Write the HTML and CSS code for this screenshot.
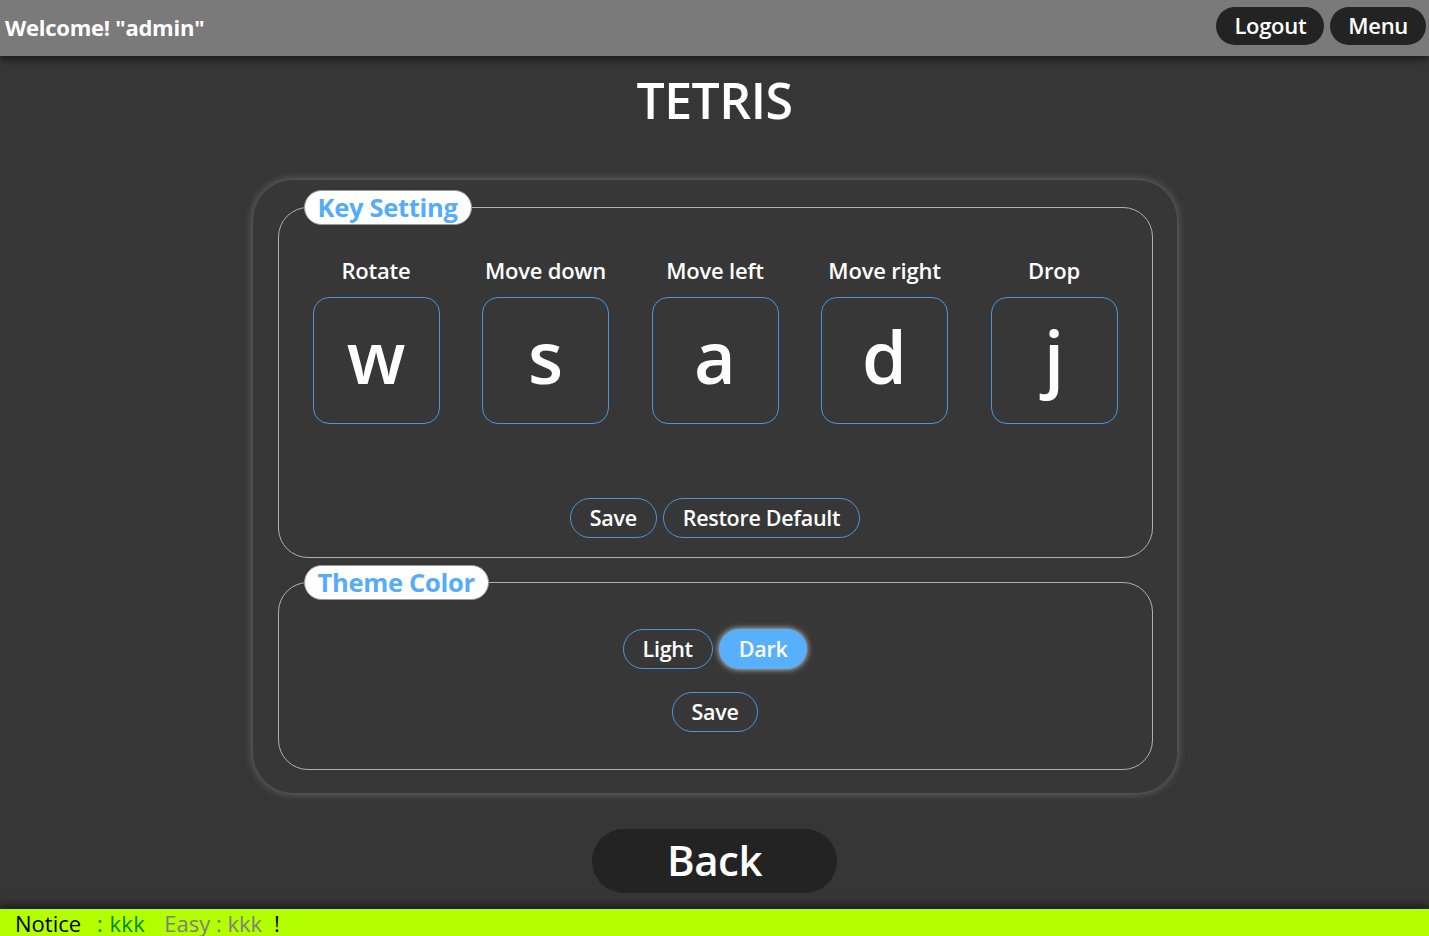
FILE: index.html
```html
<!DOCTYPE html>
<html lang="en">
<head>
<meta charset="utf-8">
<title>Tetris - Settings</title>
<link rel="stylesheet" href="styles.css">
</head>
<body>
<header class="topbar">
  <div class="welcome">Welcome! "admin"</div>
  <div class="top-actions">
    <button class="pill-dark">Logout</button>
    <button class="pill-dark">Menu</button>
  </div>
</header>
<main class="page">
  <h1 class="title">TETRIS</h1>
  <section class="card">
    <fieldset class="group keys">
      <legend class="legend">Key Setting</legend>
      <div class="key-grid">
        <div class="key-col"><div class="key-label">Rotate</div><div class="key-box">w</div></div>
        <div class="key-col"><div class="key-label">Move down</div><div class="key-box">s</div></div>
        <div class="key-col"><div class="key-label">Move left</div><div class="key-box">a</div></div>
        <div class="key-col"><div class="key-label">Move right</div><div class="key-box">d</div></div>
        <div class="key-col"><div class="key-label">Drop</div><div class="key-box">j</div></div>
      </div>
      <div class="row-buttons">
        <button class="pill-outline">Save</button>
        <button class="pill-outline">Restore Default</button>
      </div>
    </fieldset>
    <fieldset class="group theme">
      <legend class="legend">Theme Color</legend>
      <div class="row-buttons theme-choice">
        <button class="pill-outline">Light</button>
        <button class="pill-outline active">Dark</button>
      </div>
      <div class="row-buttons theme-save">
        <button class="pill-outline">Save</button>
      </div>
    </fieldset>
  </section>
  <div class="back-row"><button class="back">Back</button></div>
</main>
<footer class="notice">
  <span class="n-label">Notice</span>
  <span class="n-green">: kkk</span>
  <span class="n-gray">Easy : kkk</span>
  <span class="n-bang">!</span>
</footer>
</body>
</html>
```

FILE: styles.css
```css
* { box-sizing: border-box; }
html, body { margin: 0; padding: 0; }
body {
  background: #363636;
  font-family: "Open Sans", "Noto Sans", sans-serif;
  color: #fff;
  height: 936px;
  overflow: hidden;
  display: flex;
  flex-direction: column;
}
button { font-family: inherit; cursor: pointer; }

.topbar {
  height: 56px;
  background: #7a7a7a;
  display: flex;
  align-items: center;
  justify-content: space-between;
  padding: 0 3px 0 5px;
  box-shadow: 0 3px 8px rgba(0,0,0,0.6);
  position: relative;
  z-index: 1;
}
.welcome {
  font-size: 22px;
  font-weight: 700;
  color: #fff;
  margin-top: -2px;
  letter-spacing: -0.25px;
}
.top-actions { display: flex; gap: 6px; margin-top: -4px; }
.pill-dark {
  background: #232323;
  color: #fff;
  border: none;
  border-radius: 20px;
  height: 38px;
  padding: 0 18px 2px;
  font-size: 22px;
  font-weight: 600;
  letter-spacing: -0.3px;
}

.page { flex: 1; display: flex; flex-direction: column; align-items: center; }
.title {
  margin: 16px 0 0;
  font-size: 50px;
  font-weight: 600;
  line-height: 56px;
  letter-spacing: -0.5px;
}

.card {
  width: 924px;
  margin-top: 52px;
  border-radius: 40px;
  background: #373737;
  box-shadow: 0 0 10px rgba(220,220,220,0.35);
  padding: 10px 24px 23px 25px;
}
.group {
  margin: 0;
  border: 1px solid #b0b0b0;
  border-radius: 30px;
  padding: 0;
  min-width: 0;
}
.legend {
  margin-left: 25px;
  padding: 0 13px;
  height: 35px;
  line-height: 32px;
  background: #fff;
  border: 1px solid #999;
  border-radius: 18px;
  color: #55acf8;
  font-size: 25.5px;
  font-weight: 700;
  letter-spacing: -0.3px;
}
.keys { padding-bottom: 19px; }
.key-grid {
  display: grid;
  grid-template-columns: repeat(5, 169.5px);
  justify-content: center;
  margin-top: 30px;
}
.key-col { display: flex; flex-direction: column; align-items: center; }
.key-label {
  font-size: 22px;
  font-weight: 600;
  line-height: 30px;
  letter-spacing: -0.2px;
}
.key-box {
  margin-top: 12px;
  width: 127px;
  height: 127px;
  border: 1px solid #4a95dc;
  border-radius: 16px;
  display: flex;
  align-items: center;
  justify-content: center;
  font-size: 72px;
  font-weight: 600;
  line-height: 1;
  padding-bottom: 10px;
}
.row-buttons { display: flex; justify-content: center; gap: 6px; }
.keys .row-buttons { margin-top: 74px; }
.pill-outline {
  height: 40px;
  border: 1px solid #4a95dc;
  border-radius: 20px;
  background: transparent;
  color: #fff;
  font-size: 21.5px;
  font-weight: 600;
  padding: 0 19px 2px;
  letter-spacing: -0.3px;
}
.pill-outline.active {
  background: #58b0fc;
  border-color: #58b0fc;
  box-shadow: 0 0 6px rgba(255,255,255,0.8);
}
.theme { margin-top: 7px; padding-bottom: 37px; }
.theme-choice { margin-top: 29px; }
.theme-save { margin-top: 23px; }

.back-row { margin-top: 36px; }
.back {
  width: 245px;
  height: 64px;
  border: none;
  border-radius: 32px;
  background: #232323;
  color: #fff;
  font-size: 42px;
  font-weight: 600;
  letter-spacing: -0.5px;
  padding-bottom: 4px;
}

.notice {
  height: 27px;
  margin-top: auto;
  background: #b3ff00;
  box-shadow: 0 -4px 8px rgba(0,0,0,0.5);
  color: #000;
  font-size: 22px;
  line-height: 28px;
  padding-left: 15px;
  display: flex;
  white-space: pre;
}
.n-green { color: #008c00; margin-left: 16px; letter-spacing: 0.4px; }
.n-gray { color: #808080; margin-left: 19px; }
.n-bang { margin-left: 12px; }
```
